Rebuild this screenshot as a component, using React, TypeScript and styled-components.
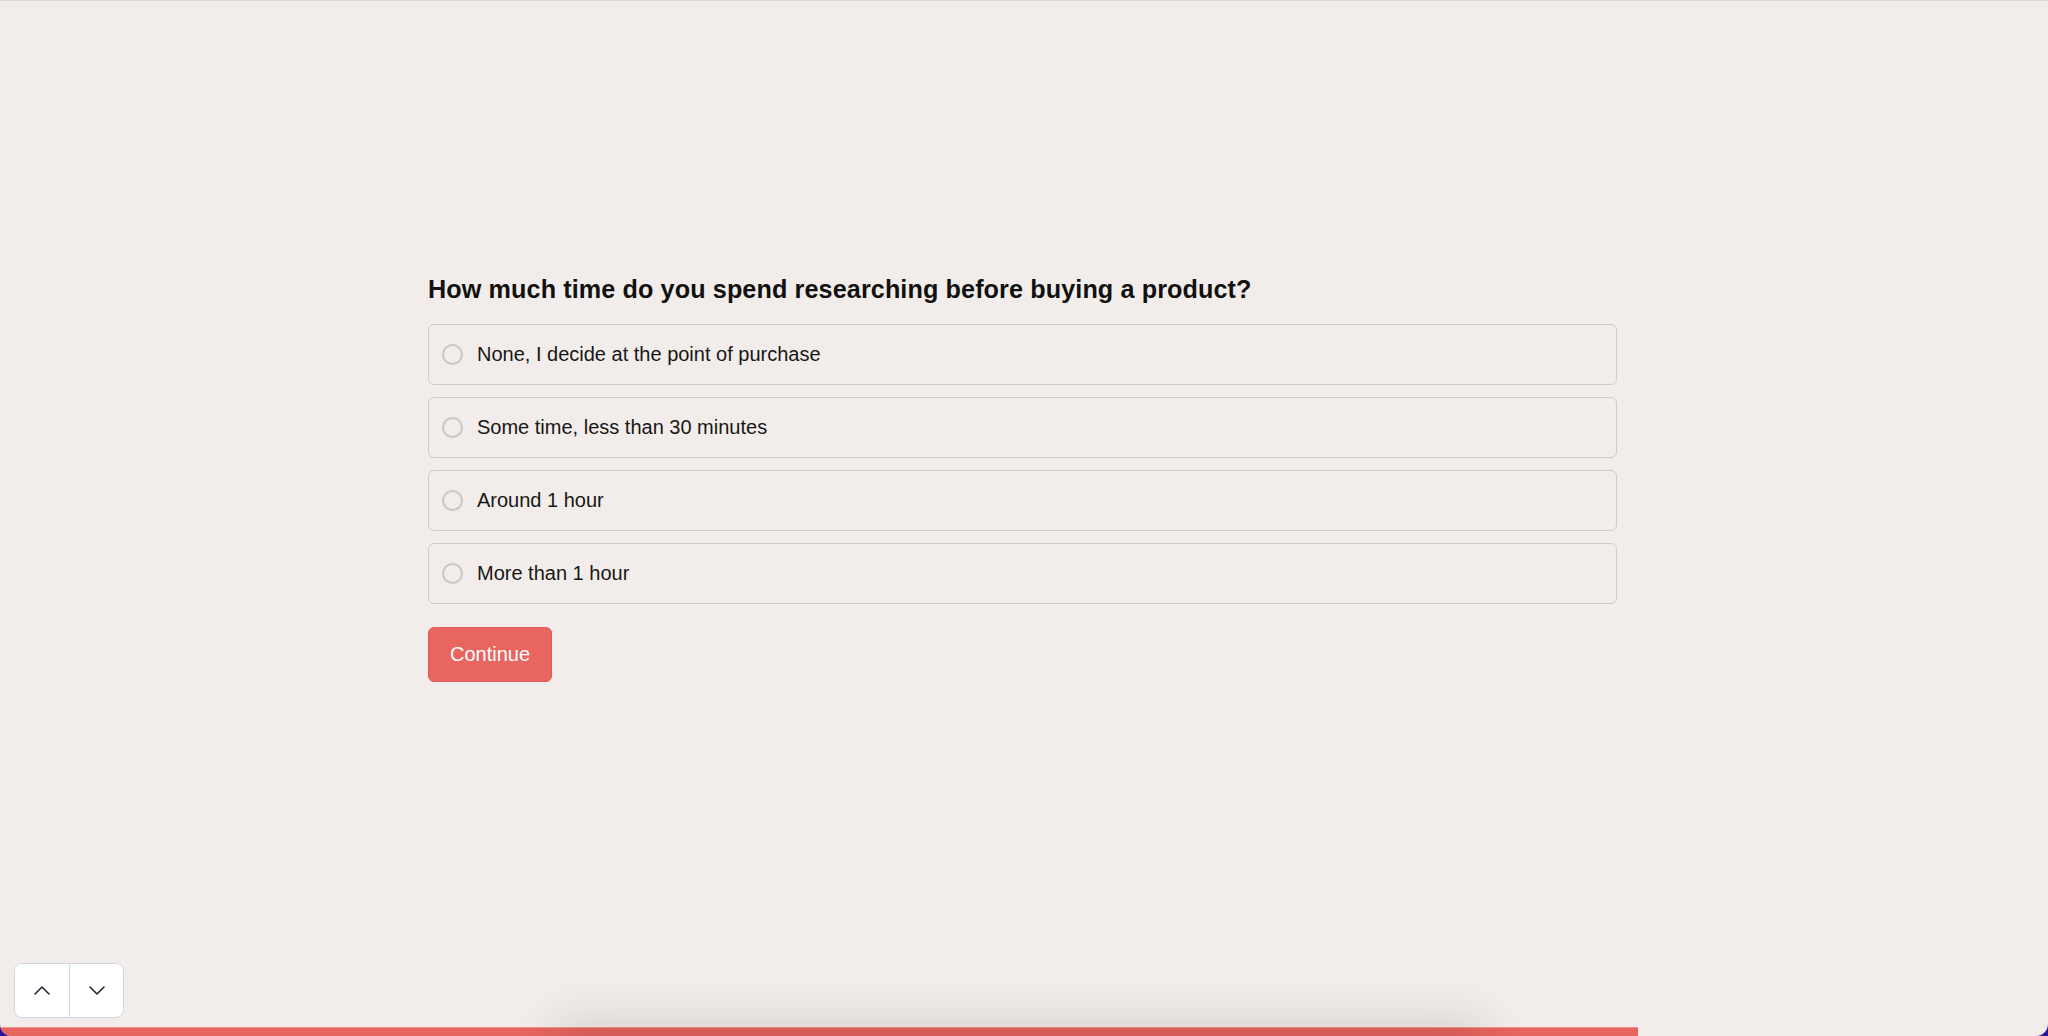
import React, { useState } from "react";
import styled, { createGlobalStyle } from "styled-components";

const GlobalStyle = createGlobalStyle`
  html, body {
    margin: 0;
    padding: 0;
    background: #2a1496;
  }
  body {
    font-family: "Liberation Sans", Arial, Helvetica, sans-serif;
  }
  * { box-sizing: border-box; }
`;

const Page = styled.div`
  position: relative;
  height: 100vh;
  display: flex;
  flex-direction: column;
  background: #f2edea;
  border-top: 1px solid #d9d7d5;
  border-radius: 0 0 12px 12px;
  overflow: hidden;
`;

const Main = styled.main`
  flex: 1;
  padding: 272px 3px 0 0;
  display: flex;
  justify-content: center;
`;

const Form = styled.section`
  width: 1189px;
  display: flex;
  flex-direction: column;
`;

const Question = styled.h1`
  margin: 0 0 19px;
  font-size: 25.2px;
  line-height: 32px;
  font-weight: 700;
  color: #111111;
  letter-spacing: 0.1px;
`;

const Options = styled.div`
  display: flex;
  flex-direction: column;
  gap: 12px;
`;

const Option = styled.label<{ $selected: boolean }>`
  height: 61px;
  display: flex;
  align-items: center;
  gap: 14px;
  padding: 0 13px;
  border: 1.5px solid ${(p) => (p.$selected ? "#e8645f" : "#cfcbc8")};
  border-radius: 6px;
  background: transparent;
  cursor: pointer;
  font-size: 20px;
  color: #171717;
`;

const Radio = styled.span<{ $selected: boolean }>`
  width: 21px;
  height: 21px;
  flex: none;
  border-radius: 50%;
  border: 2px solid ${(p) => (p.$selected ? "#e8645f" : "#cac7c5")};
  background: ${(p) => (p.$selected ? "radial-gradient(circle, #e8645f 45%, transparent 50%)" : "transparent")};
`;

const ContinueButton = styled.button`
  align-self: flex-start;
  margin-top: 23px;
  height: 55px;
  padding: 0 21px;
  border: 1px solid #e45c57;
  border-radius: 6px;
  background: #e8665f;
  color: #ffffff;
  font-family: "Liberation Sans", Arial, sans-serif;
  font-size: 20px;
  cursor: pointer;
`;

const Footer = styled.footer`
  padding: 0 0 9px 14px;
  display: flex;
`;

const NavGroup = styled.div`
  display: flex;
  height: 55px;
  background: #ffffff;
  border: 1.5px solid #d3d9e1;
  border-radius: 8px;
  overflow: hidden;
`;

const NavButton = styled.button<{ $divider?: boolean }>`
  width: 54px;
  height: 100%;
  display: flex;
  align-items: center;
  justify-content: center;
  padding: 0;
  border: none;
  border-left: ${(p) => (p.$divider ? "1.5px solid #d3d9e1" : "none")};
  background: transparent;
  color: #1b2030;
  cursor: pointer;
`;

const Track = styled.div`
  height: 9px;
  display: flex;
`;

const Fill = styled.div`
  height: 100%;
  background: #e8645f;
  border-top: 1px solid #f0928d;
`;

const ShadowCaster = styled.div`
  position: absolute;
  left: 570px;
  width: 900px;
  bottom: -60px;
  height: 60px;
  box-shadow: 0 0 45px 12px rgba(60, 40, 30, 0.16);
  pointer-events: none;
`;

const Chevron = ({ dir }: { dir: "up" | "down" }) => (
  <svg width="16" height="9" viewBox="0 0 16 9" fill="none" stroke="currentColor" strokeWidth="1.5" strokeLinecap="round" strokeLinejoin="round">
    {dir === "up" ? <path d="M1 8 8 1l7 7" /> : <path d="M1 1l7 7 7-7" />}
  </svg>
);

const options = [
  "None, I decide at the point of purchase",
  "Some time, less than 30 minutes",
  "Around 1 hour",
  "More than 1 hour",
];

export default function App() {
  const [selected, setSelected] = useState<number | null>(null);
  const progress = 80;
  return (
    <>
      <GlobalStyle />
      <Page>
        <Main>
          <Form>
            <Question>How much time do you spend researching before buying a product?</Question>
            <Options>
              {options.map((o, i) => (
                <Option key={o} $selected={selected === i} onClick={() => setSelected(i)}>
                  <Radio $selected={selected === i} />
                  {o}
                </Option>
              ))}
            </Options>
            <ContinueButton>Continue</ContinueButton>
          </Form>
        </Main>
        <Footer>
          <NavGroup>
            <NavButton aria-label="Previous">
              <Chevron dir="up" />
            </NavButton>
            <NavButton $divider aria-label="Next">
              <Chevron dir="down" />
            </NavButton>
          </NavGroup>
        </Footer>
        <Track>
          <Fill style={{ width: `${progress}%` }} />
        </Track>
        <ShadowCaster />
      </Page>
    </>
  );
}
